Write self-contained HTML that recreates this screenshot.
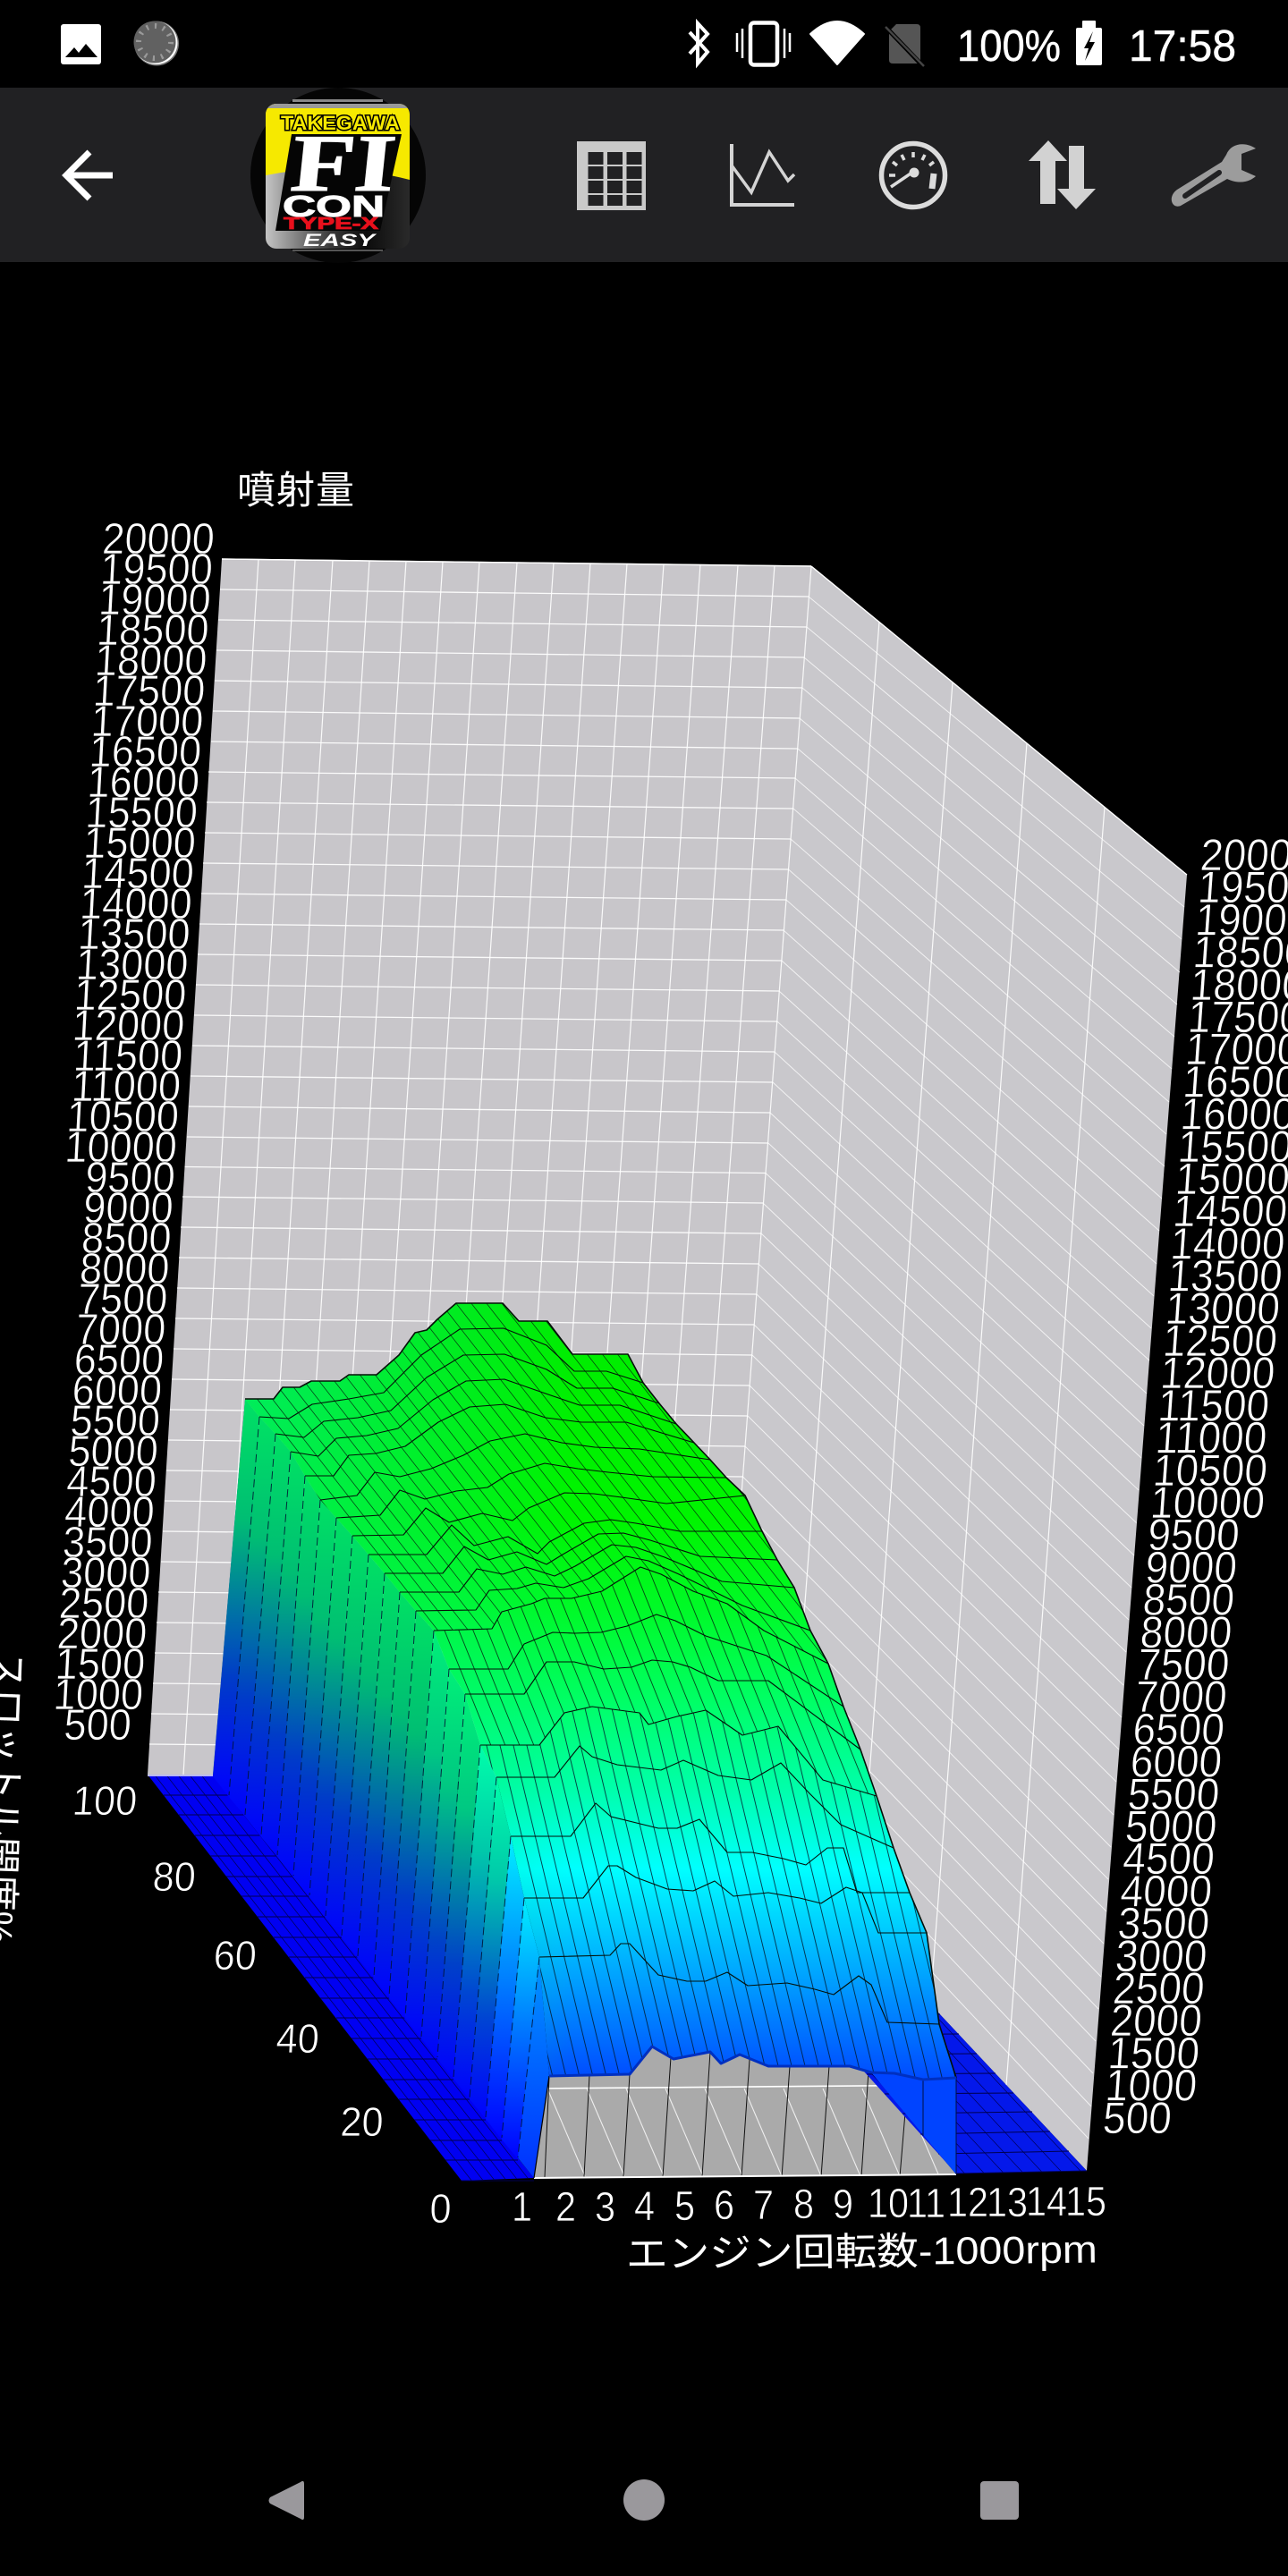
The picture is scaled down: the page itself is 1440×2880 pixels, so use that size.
<!DOCTYPE html>
<html lang="ja"><head><meta charset="utf-8"><title>FI CON 3D Map</title>
<style>
html,body{margin:0;padding:0;background:#000;width:1440px;height:2880px;overflow:hidden}
svg{display:block}
text{font-family:"Liberation Sans","Noto Sans CJK JP",sans-serif}
.n{fill:#fff;stroke:#000;stroke-width:.7;font-size:49px}
.r{fill:#fff;stroke:#000;stroke-width:.7;font-size:50px}
.z{fill:#fff;stroke:#000;stroke-width:.7;font-size:46px}
</style></head><body>
<svg xmlns="http://www.w3.org/2000/svg" width="1440" height="2880" viewBox="0 0 1440 2880">
<defs>
<linearGradient id="lg" x1="0" x2="1" y1="0" y2="0"><stop offset="0" stop-color="#c4c4c4"/><stop offset=".45" stop-color="#3a3a3a"/><stop offset=".7" stop-color="#0c0c0c"/><stop offset="1" stop-color="#2a2a2a"/></linearGradient>
<clipPath id="cl"><rect x="297" y="116" width="161" height="162" rx="12"/></clipPath>
<clipPath id="fl"><polygon points="597,2435 614,2321 704,2319 729,2288 753,2302 794,2294 806,2307 827,2297 859,2310 950,2310 974,2317 1069,2431"/></clipPath>
<linearGradient id="sg" gradientUnits="userSpaceOnUse" x1="0" x2="0" y1="1450" y2="2330">
<stop offset="0" stop-color="rgb(0,235,0)"/><stop offset=".284" stop-color="rgb(0,245,0)"/><stop offset=".398" stop-color="rgb(0,250,40)"/><stop offset=".511" stop-color="rgb(0,255,100)"/><stop offset=".625" stop-color="rgb(0,255,170)"/><stop offset=".727" stop-color="rgb(0,255,255)"/><stop offset=".852" stop-color="rgb(0,170,255)"/><stop offset="1" stop-color="rgb(0,70,255)"/>
</linearGradient>
<linearGradient id="sl" gradientUnits="userSpaceOnUse" x1="274" x2="640" y1="0" y2="0"><stop offset="0" stop-color="rgb(0,235,130)" stop-opacity=".7"/><stop offset="1" stop-color="rgb(0,235,130)" stop-opacity="0"/></linearGradient>
<linearGradient id="f1" x1="0" x2="0" y1="1" y2="0"><stop offset="0" stop-color="#0000ff"/><stop offset=".3" stop-color="rgb(0,60,200)"/><stop offset=".7" stop-color="rgb(0,190,115)"/><stop offset="1" stop-color="rgb(0,225,100)"/></linearGradient>
<linearGradient id="f2" x1="0" x2="0" y1="1" y2="0"><stop offset="0" stop-color="#0000ff"/><stop offset=".3" stop-color="rgb(0,65,200)"/><stop offset=".7" stop-color="rgb(0,200,130)"/><stop offset="1" stop-color="rgb(0,240,120)"/></linearGradient>
<linearGradient id="f3" x1="0" x2="0" y1="1" y2="0"><stop offset="0" stop-color="#0000ff"/><stop offset=".3" stop-color="rgb(0,70,210)"/><stop offset=".7" stop-color="rgb(0,200,170)"/><stop offset="1" stop-color="rgb(0,255,170)"/></linearGradient>
<linearGradient id="f4" x1="0" x2="0" y1="1" y2="0"><stop offset="0" stop-color="#0000ff"/><stop offset="1" stop-color="rgb(0,240,255)"/></linearGradient>
<linearGradient id="f5" x1="0" x2="0" y1="1" y2="0"><stop offset="0" stop-color="#0030ff"/><stop offset="1" stop-color="rgb(0,150,255)"/></linearGradient>
<pattern id="pa" width="17" height="40" patternUnits="userSpaceOnUse" patternTransform="skewX(38)"><rect width="1" height="40" fill="#04200e"/></pattern>
<pattern id="pb" width="16" height="40" patternUnits="userSpaceOnUse" patternTransform="skewX(22)"><rect width="1" height="40" fill="#04200e"/></pattern>
<pattern id="pc" width="15" height="40" patternUnits="userSpaceOnUse" patternTransform="skewX(13.5)"><rect width="1" height="40" fill="#02182a"/></pattern>
<pattern id="ps" width="13" height="40" patternUnits="userSpaceOnUse" patternTransform="skewX(38)"><rect width="1" height="40" fill="#000060"/></pattern>
<pattern id="pr" width="22" height="40" patternUnits="userSpaceOnUse" patternTransform="skewX(43)"><rect width="1" height="40" fill="#000060"/></pattern>
<polygon id="sf" points="274,1564 306,1564 316,1551 335,1551 348,1544 380,1544 390,1537 421,1537 446,1515 464,1490 477,1487 489,1475 510,1457 562,1457 580,1477 612,1477 640,1514 702,1514 719,1546 737,1569 756,1592 776,1613 794,1632 812,1652 833,1672 852,1712 869,1744 888,1775 906,1823 926,1860 943,1908 962,1956 980,2008 999,2066 1017,2116 1036,2161 1050,2263 1069,2323 1032,2325 1000,2318 974,2317 950,2310 859,2310 827,2297 806,2307 794,2294 753,2302 729,2288 704,2319 614,2321 603,2188 586,2122 571,2053 555,1987 537,1951 520,1894 502,1866 485,1823 465,1801 447,1780 430,1759 412,1738 394,1717 376,1697 358,1677 341,1650 325,1623 308,1603 290,1584"/>
</defs>
<rect width="1440" height="2880" fill="#000"/>
<!-- status bar -->
<rect x="68" y="27" width="45" height="45" rx="3" fill="#fff"/>
<path d="M73 64L83 53L88 59L96 49L109 64Z" fill="#000"/>
<circle cx="175" cy="48.5" r="25" fill="#777"/><circle cx="174.5" cy="48" r="24" fill="#fff"/><circle cx="173" cy="47" r="23.5" fill="#616161"/>
<circle cx="173" cy="47" r="18" fill="none" stroke="#9a9a9a" stroke-width="6" stroke-dasharray="2.2 7.2"/>
<path d="M771 36L791 58L780 71V26L791 38L771 60" fill="none" stroke="#fff" stroke-width="4"/>
<rect x="839" y="25.500" width="30" height="47" rx="4" fill="none" stroke="#fff" stroke-width="4.500"/>
<path d="M830 32V65M877 32V65M824 37V58M883 37V58" stroke="#fff" stroke-width="2.500"/>
<path d="M936 72L906 38Q936 10 966 38Z" fill="#fff" stroke="#fff" stroke-width="2" stroke-linejoin="round"/>
<path d="M1002 27H1025Q1029 27 1029 31V71H998Q994 71 994 67V35Z" fill="#555"/>
<path d="M990 30L1032 74" stroke="#000" stroke-width="5"/><path d="M990 30L1033 74" stroke="#444" stroke-width="2.500"/>
<text x="1070" y="68" font-size="49" fill="#fff" stroke="#fff" stroke-width=".5" textLength="116" lengthAdjust="spacingAndGlyphs">100%</text>
<rect x="1203" y="31" width="29" height="42" rx="2" fill="#fff"/><rect x="1210" y="23" width="15" height="9" rx="1" fill="#fff"/>
<path d="M1222 35L1212 54H1217L1213 68L1224 47H1218Z" fill="#000"/>
<text x="1262" y="68" font-size="49" fill="#fff" stroke="#fff" stroke-width=".5" textLength="120" lengthAdjust="spacingAndGlyphs">17:58</text>
<!-- toolbar -->
<rect y="98" width="1440" height="195" fill="#212123"/>
<path d="M126 196H74M100 170L74 196L100 222" fill="none" stroke="#fff" stroke-width="7"/>
<!-- logo -->
<circle cx="378" cy="196" r="98" fill="#050505"/>
<rect x="327" y="111" width="101" height="3" fill="#888"/><rect x="327" y="279" width="101" height="2" fill="#555"/>
<g clip-path="url(#cl)">
<rect x="297" y="116" width="161" height="162" fill="url(#lg)"/>
<path d="M297 116H458V201Q375 180 297 196Z" fill="#f6e900"/>
<rect x="297" y="116" width="161" height="5" fill="#999"/>
<polygon points="326,150 449,150 425,258 308,258" fill="#050505"/>
</g>
<text x="314" y="145" font-size="22" font-weight="700" fill="#f6e900" stroke="#000" stroke-width="3" paint-order="stroke" textLength="133" lengthAdjust="spacingAndGlyphs">TAKEGAWA</text>
<text transform="translate(323 213) skewX(-6)" font-size="91" font-weight="700" fill="#fff" stroke="#fff" stroke-width="1" textLength="116" lengthAdjust="spacingAndGlyphs" style="font-family:'Liberation Serif',serif">FI</text>
<text x="316" y="242" font-size="33" font-weight="700" fill="#fff" stroke="#fff" stroke-width="1" textLength="114" lengthAdjust="spacingAndGlyphs">CON</text>
<text x="317" y="256" font-size="18" font-weight="700" fill="#e8101c" stroke="#e8101c" stroke-width=".8" textLength="106" lengthAdjust="spacingAndGlyphs">TYPE-X</text>
<text x="339" y="275" font-size="19" font-weight="700" font-style="italic" fill="#fff" textLength="80" lengthAdjust="spacingAndGlyphs">EASY</text>
<!-- toolbar icons -->
<rect x="645" y="158" width="77" height="77" fill="#c9c9c9"/>
<g fill="#212123"><rect x="657.500" y="170" width="17" height="14"/><rect x="679" y="170" width="17" height="14"/><rect x="700.500" y="170" width="17" height="14"/><rect x="657.500" y="186" width="17" height="14"/><rect x="679" y="186" width="17" height="14"/><rect x="700.500" y="186" width="17" height="14"/><rect x="657.500" y="202" width="17" height="14"/><rect x="679" y="202" width="17" height="14"/><rect x="700.500" y="202" width="17" height="14"/><rect x="657.500" y="218" width="17" height="12"/><rect x="679" y="218" width="17" height="12"/><rect x="700.500" y="218" width="17" height="12"/></g>
<path d="M818 161V229H888" fill="none" stroke="#d4d4d4" stroke-width="4"/>
<path d="M818 185L840 215L860 170L881 202L888 195" fill="none" stroke="#d4d4d4" stroke-width="3.500"/>
<circle cx="1021" cy="196" r="35.500" fill="none" stroke="#dcdcdc" stroke-width="5.500"/>
<path d="M1021 170V176M1008 173L1011 179M1034 173L1031 179M998 181L1003 185M1044 181L1039 185M994 196H1001" stroke="#dcdcdc" stroke-width="3.500"/>
<path d="M996 209L1021 192" stroke="#dcdcdc" stroke-width="3.500"/><circle cx="1022" cy="193" r="5.500" fill="#dcdcdc"/>
<path d="M1044 194L1042 211" stroke="#dcdcdc" stroke-width="7"/>
<path d="M1172 157L1193 180H1180V228H1163V180H1150Z" fill="#d2d2d2"/>
<path d="M1203 234L1182 211H1195V163H1212V211H1225Z" fill="#d2d2d2"/>
<path d="M1404 166C1392 158 1376 160 1371 173L1366 181L1316 212C1305 220 1310 234 1320 230L1372 200C1385 206 1396 204 1404 197L1388 190V172Z" fill="#9c9c9c"/>
<path d="M1325 219L1363 193" stroke="#212123" stroke-width="6" stroke-linecap="round"/>

<!-- walls -->
<polygon points="248,625 907,633 805,1990 165,1984" fill="#c8c6ca"/>
<polygon points="907,633 1327,978 1215,2427 805,1990" fill="#c9c8cc"/>
<path fill="none" stroke="#fff" stroke-width="1.300" stroke-opacity=".9" d="M248 625L907 633M246 659L904 667M244 693L902 701M242 727L899 735M240 761L897 769M238 795L894 803M236 829L892 837M233 863L889 870M231 897L887 904M229 931L884 938M227 965L881.500 972M225 999L879 1006M223 1033L876 1040M221 1067L874 1074M219 1101L871 1108M217 1135L869 1142M215 1169L866 1176M213 1203L864 1210M211 1237L861 1244M209 1271L859 1278M206.500 1304.500L856 1311.500M204 1338L853 1345M202 1372L851 1379M200 1406L848 1413M198 1440L846 1447M196 1474L843 1481M194 1508L841 1515M192 1542L838 1549M190 1576L836 1583M188 1610L833 1617M186 1644L830.500 1651M184 1678L828 1685M182 1712L825 1719M180 1746L823 1753M177 1780L820 1786M175 1814L818 1820M173 1848L815 1854M171 1882L813 1888M169 1916L810 1922M167 1950L808 1956"/>
<path fill="none" stroke="#fff" stroke-width="1.200" stroke-opacity=".9" d="M289 625L205 1984M330 626L245 1985M372 626L285 1985M413 627L325 1986M454 627L365 1986M495 628L405 1986M536 628L445 1987M578 629L485 1987M619 629L525 1987M660 630L565 1988M701 630L605 1988M742 631L645 1988M783 631L685 1989M825 632L725 1989M866 632L765 1990M907 633L805 1990"/>
<path fill="none" stroke="#fff" stroke-width="1" stroke-opacity=".75" d="M904 667L1324 1014M902 701L1321 1050M899 735L1319 1087M897 769L1316 1123M894 803L1313 1159M892 837L1310 1195M889 870L1307 1232M887 904L1304 1268M884 938L1302 1304M881.500 972L1299 1340M879 1006L1296 1376M876 1040L1293 1413M874 1074L1290 1449M871 1108L1287 1485M869 1142L1285 1521M866 1176L1282 1558M864 1210L1279 1594M861 1244L1276 1630M859 1278L1273 1666M856 1311.500L1270.500 1702.500M853 1345L1268 1739M851 1379L1265 1775M848 1413L1262 1811M846 1447L1259 1847M843 1481L1256 1884M841 1515L1254 1920M838 1549L1251 1956M836 1583L1248 1992M833 1617L1245 2029M830.500 1651L1242 2065M828 1685L1239 2101M825 1719L1237 2137M823 1753L1234 2173M820 1786L1231 2210M818 1820L1228 2246M815 1854L1225 2282M813 1888L1222 2318M810 1922L1220 2355M808 1956L1217 2391"/>
<path fill="none" stroke="#fff" stroke-width="1.200" stroke-opacity=".9" d="M983 695L879 2069M1065 763L959 2154M1148 831L1040 2241M1235 902L1125 2331"/>
<path fill="none" stroke="#fff" stroke-width="1.400" d="M248 625L907 633M907 633L1327 978"/>

<!-- floor front -->
<polygon points="597,2435 614,2321 704,2319 729,2288 753,2302 794,2294 806,2307 827,2297 859,2310 950,2310 974,2317 1069,2431" fill="#aaaaaa"/>
<g clip-path="url(#fl)">
<path stroke="#fff" stroke-width="1.600" d="M600 2335L1080 2331"/>
<path stroke="#eee" stroke-width="1.100" d="M612 2335L654 2433M656 2335L698 2433M700 2335L742 2433M744 2335L786 2433M788 2335L830 2433M832 2335L874 2433M876 2335L918 2433M920 2335L962 2433M964 2335L1006 2433M1008 2335L1050 2433"/>
<path stroke="#111" stroke-width="1" d="M614 2321L609 2434M659 2320L653 2434M704 2319L697 2434M750 2300L741 2434M794 2294L785 2434M838 2303L829 2434M883 2310L874 2434M927 2310L918 2434M971 2316L963 2434M1013 2350L1006 2434"/>
</g>
<path stroke="#fff" stroke-width="2" d="M597 2435L1069 2431"/>

<!-- blue floor strips -->
<polygon points="165,1984 238,1984 597,2435 516,2438" fill="#0000f2"/>
<polygon points="165,1984 238,1984 597,2435 516,2438" fill="url(#ps)"/>
<polygon points="669,1987 805,1990 1215,2427 1069,2430" fill="#0418ea"/>
<polygon points="669,1987 805,1990 1215,2427 1069,2430" fill="url(#pr)"/>
<path stroke="#b8b8f0" stroke-width="2" d="M165 1985H238"/>
<path stroke="#000050" stroke-width="1" fill="none" d="M183 2007H256M200 2029H274M218 2052H292M235 2075H310M253 2098H328M270 2120H346M288 2143H364M305 2166H382M323 2188H400M341 2211H418M358 2234H435M376 2256H453M393 2279H471M411 2302H489M428 2325H507M446 2347H525M463 2370H543M481 2393H561M498 2415H579M516 2438H597"/>
<path stroke="#000050" stroke-width="1" fill="none" d="M909 2253L1051 2252M929 2275L1072 2274M949 2297L1092 2296M969 2319L1113 2318M989 2341L1133 2340M1009 2363L1154 2361M1029 2386L1174 2383M1049 2408L1195 2405M1069 2430L1215 2427"/>

<!-- left face -->
<polygon points="274,1564 614,2321 597,2435 238,1984" fill="#006090"/>
<g>
<polygon points="274,1564 290,1584 256,2009 238,1986" fill="url(#f1)"/>
<polygon points="290,1584 308,1603 274,2031 256,2009" fill="url(#f1)"/>
<polygon points="308,1603 325,1623 292,2054 274,2031" fill="url(#f1)"/>
<polygon points="325,1623 341,1650 310,2076 292,2054" fill="url(#f1)"/>
<polygon points="341,1650 358,1677 328,2099 310,2076" fill="url(#f1)"/>
<polygon points="358,1677 376,1697 346,2121 328,2099" fill="url(#f1)"/>
<polygon points="376,1697 394,1717 364,2144 346,2121" fill="url(#f1)"/>
<polygon points="394,1717 412,1738 382,2166 364,2144" fill="url(#f1)"/>
<polygon points="412,1738 430,1759 400,2189 382,2166" fill="url(#f1)"/>
<polygon points="430,1759 447,1780 418,2212 400,2189" fill="url(#f1)"/>
<polygon points="447,1780 465,1801 435,2234 418,2212" fill="url(#f1)"/>
<polygon points="465,1801 485,1823 453,2257 435,2234" fill="url(#f1)"/>
<polygon points="485,1823 502,1866 471,2279 453,2257" fill="url(#f2)"/>
<polygon points="502,1866 520,1894 489,2302 471,2279" fill="url(#f2)"/>
<polygon points="520,1894 537,1951 507,2324 489,2302" fill="url(#f2)"/>
<polygon points="537,1951 555,1987 525,2347 507,2324" fill="url(#f3)"/>
<polygon points="555,1987 571,2053 543,2369 525,2347" fill="url(#f3)"/>
<polygon points="571,2053 586,2122 561,2392 543,2369" fill="url(#f4)"/>
<polygon points="586,2122 603,2188 579,2414 561,2392" fill="url(#f4)"/>
<polygon points="603,2188 614,2321 597,2435 579,2412" fill="url(#f5)"/>
</g>
<path fill="none" stroke="#001030" stroke-width="1" stroke-dasharray="9 5" opacity=".85" d="M290 1584L256 2007M308 1603L274 2029M325 1623L292 2052M341 1650L310 2074M358 1677L328 2097M376 1697L346 2119M394 1717L364 2142M412 1738L382 2164M430 1759L400 2187M447 1780L418 2210M465 1801L435 2232M485 1823L453 2255M502 1866L471 2277M520 1894L489 2300M537 1951L507 2322M555 1987L525 2345M571 2053L543 2367M586 2122L561 2390M603 2188L579 2412"/>
<path fill="none" stroke="#000" stroke-width="1.200" d="M614 2321L597 2435"/>

<!-- front-right drop -->
<polygon points="1069,2323 1069,2431 974,2317 1000,2318 1032,2325" fill="#0044ff"/>
<path stroke="#001040" stroke-width="1" d="M1032 2325V2388M1069 2323V2431"/>

<!-- surface -->
<use href="#sf" fill="url(#sg)"/>
<use href="#sf" fill="url(#sl)"/>
<polygon fill="url(#pa)" opacity=".8" points="274,1564 306,1564 316,1551 335,1551 348,1544 380,1544 390,1537 421,1537 446,1515 464,1490 477,1487 489,1475 510,1457 562,1457 580,1477 612,1477 640,1514 702,1514 719,1546 737,1569 756,1592 776,1613 794,1632 812,1652 833,1672 852,1712 869,1744 888,1775 906,1823 926,1860 854,1823 813,1793 775,1779 739,1760 716,1752 673,1779 639,1787 609,1787 594,1793 561,1802 550,1821 485,1823 465,1801 447,1780 430,1759 412,1738 394,1717 376,1697 358,1677 341,1650 325,1623 308,1603 290,1584"/>
<polygon fill="url(#pb)" opacity=".8" points="485,1823 550,1821 561,1802 594,1793 609,1787 639,1787 673,1779 716,1752 739,1760 775,1779 813,1793 854,1823 926,1860 943,1908 962,1956 980,2008 920,1990 870,1930 830,1940 789,1912 757,1919 725,1928 715,1915 662,1908 631,1915 603,1951 537,1951 520,1894 502,1866"/>
<polygon fill="url(#pc)" opacity=".8" points="537,1951 603,1951 631,1915 662,1908 715,1915 725,1928 757,1919 789,1912 830,1940 870,1930 920,1990 980,2008 999,2066 1017,2116 1036,2161 1050,2263 1069,2323 1032,2325 1000,2318 974,2317 950,2310 859,2310 827,2297 806,2307 794,2294 753,2302 729,2288 704,2319 614,2321 603,2188 586,2122 571,2053 555,1987"/>
<g fill="none" stroke="#041008" stroke-width="1.100" stroke-linejoin="round">
<polyline stroke-width="1.600" points="274,1564 306,1564 316,1551 335,1551 348,1544 380,1544 390,1537 421,1537 446,1515 464,1490 477,1487 489,1475 510,1457 562,1457 580,1477 612,1477 640,1514 702,1514 719,1546 737,1569 756,1592 776,1613 794,1632 812,1652 833,1672 852,1712 869,1744 888,1775 906,1823 926,1860 943,1908 962,1956 980,2008 999,2066 1017,2116 1036,2161 1050,2263 1069,2323"/>
<polyline points="290,1584 323,1586 349,1570 390,1564 429,1557 471,1515 514,1486 563,1485 611,1504 642,1533 678,1533 719,1546"/>
<polyline points="308,1603 340,1607 362,1589 400,1585 437,1577 477,1540 518,1515 564,1514 611,1531 645,1552 685,1552 737,1569"/>
<polyline points="325,1623 356,1628 376,1608 410,1605 445,1597 484,1565 521,1544 564,1542 610,1558 648,1571 693,1571 756,1592"/>
<polyline points="341,1650 373,1650 390,1627 420,1625 453,1617 490,1590 525,1573 565,1570 610,1585 650,1590 700,1590 776,1613"/>
<polyline points="358,1677 399,1672 419,1646 447,1651 482,1642 518,1627 548,1611 587,1603 628,1613 665,1618 715,1620 794,1632"/>
<polyline points="376,1697 425,1694 447,1666 475,1676 510,1667 545,1663 569,1648 609,1636 646,1642 680,1646 730,1651 812,1652"/>
<polyline points="394,1717 451,1716 476,1686 502,1702 539,1692 573,1700 591,1686 631,1669 664,1670 695,1674 745,1681 833,1672"/>
<polyline points="412,1738 477,1738 505,1705 530,1728 568,1718 601,1737 614,1724 653,1703 683,1699 711,1703 760,1712 852,1712"/>
<polyline points="430,1759 495,1759 519,1729 546,1744 578,1735 611,1749 629,1738 669,1715 697,1714 727,1722 783,1740 869,1744"/>
<polyline points="447,1780 513,1780 533,1754 562,1760 588,1752 620,1762 643,1751 684,1727 711,1730 743,1741 807,1768 888,1775"/>
<polyline points="465,1801 532,1800 547,1778 578,1776 599,1770 630,1775 658,1765 700,1740 725,1745 759,1760 830,1795 906,1823"/>
<polyline points="485,1823 550,1821 561,1802 594,1793 609,1787 639,1787 673,1779 716,1752 739,1760 775,1779 813,1793 854,1823 926,1860"/>
<polyline points="502,1866 568,1866 586,1838 618,1825 642,1826 672,1825 701,1818 734,1805 755,1812 789,1829 857,1851 943,1908"/>
<polyline points="520,1894 586,1894 611,1858 642,1858 675,1866 706,1864 729,1856 752,1858 772,1864 803,1879 859,1879 962,1956"/>
<polyline points="537,1951 603,1951 631,1915 662,1908 715,1915 725,1928 757,1919 789,1912 830,1940 870,1930 920,1990 980,2008"/>
<polyline points="555,1987 620,1987 648,1952 662,1964 690,1973 739,1979 764,1968 803,1985 840,1990 873,1971 905,2005 940,2040 999,2066"/>
<polyline points="571,2053 638,2053 666,2016 683,2031 736,2044 757,2044 782,2034 813,2071 841,2071 876,2078 901,2085 925,2066 943,2066 958,2116 1017,2116"/>
<polyline points="586,2122 652,2122 680,2086 690,2086 711,2099 746,2112 775,2114 799,2103 820,2120 859,2116 894,2122 918,2128 946,2110 964,2116 982,2161 1036,2161"/>
<polyline points="603,2188 682,2186 694,2173 704,2173 736,2208 768,2215 789,2215 813,2205 836,2220 880,2217 911,2224 932,2230 960,2209 974,2219 992,2261 1050,2263"/>
<polyline stroke="#0030c0" stroke-width="3" points="614,2321 704,2319 729,2288 753,2302 794,2294 806,2307 827,2297 859,2310 950,2310 974,2317 1000,2318 1032,2325 1069,2323"/>
</g>

<!-- titles -->
<text x="265" y="563" font-size="43" fill="#fff" textLength="131">噴射量</text>
<g text-anchor="end">
<text class="n" transform="translate(239 619) skewX(-3) scale(.92 1)">20000</text>
<text class="n" transform="translate(236.900 653) skewX(-3) scale(.92 1)">19500</text>
<text class="n" transform="translate(234.800 687) skewX(-3) scale(.92 1)">19000</text>
<text class="n" transform="translate(232.700 721) skewX(-3) scale(.92 1)">18500</text>
<text class="n" transform="translate(230.600 755) skewX(-3) scale(.92 1)">18000</text>
<text class="n" transform="translate(228.500 789) skewX(-3) scale(.92 1)">17500</text>
<text class="n" transform="translate(226.400 823) skewX(-3) scale(.92 1)">17000</text>
<text class="n" transform="translate(224.300 857) skewX(-3) scale(.92 1)">16500</text>
<text class="n" transform="translate(222.200 891) skewX(-3) scale(.92 1)">16000</text>
<text class="n" transform="translate(220.100 925) skewX(-3) scale(.92 1)">15500</text>
<text class="n" transform="translate(218 959) skewX(-3) scale(.92 1)">15000</text>
<text class="n" transform="translate(215.900 993) skewX(-3) scale(.92 1)">14500</text>
<text class="n" transform="translate(213.800 1027) skewX(-3) scale(.92 1)">14000</text>
<text class="n" transform="translate(211.700 1061) skewX(-3) scale(.92 1)">13500</text>
<text class="n" transform="translate(209.600 1095) skewX(-3) scale(.92 1)">13000</text>
<text class="n" transform="translate(207.500 1129) skewX(-3) scale(.92 1)">12500</text>
<text class="n" transform="translate(205.400 1163) skewX(-3) scale(.92 1)">12000</text>
<text class="n" transform="translate(203.300 1197) skewX(-3) scale(.92 1)">11500</text>
<text class="n" transform="translate(201.200 1231) skewX(-3) scale(.92 1)">11000</text>
<text class="n" transform="translate(199.100 1265) skewX(-3) scale(.92 1)">10500</text>
<text class="n" transform="translate(197 1299) skewX(-3) scale(.92 1)">10000</text>
<text class="n" transform="translate(194.900 1333) skewX(-3) scale(.92 1)">9500</text>
<text class="n" transform="translate(192.800 1367) skewX(-3) scale(.92 1)">9000</text>
<text class="n" transform="translate(190.700 1401) skewX(-3) scale(.92 1)">8500</text>
<text class="n" transform="translate(188.600 1435) skewX(-3) scale(.92 1)">8000</text>
<text class="n" transform="translate(186.500 1469) skewX(-3) scale(.92 1)">7500</text>
<text class="n" transform="translate(184.400 1503) skewX(-3) scale(.92 1)">7000</text>
<text class="n" transform="translate(182.300 1537) skewX(-3) scale(.92 1)">6500</text>
<text class="n" transform="translate(180.200 1571) skewX(-3) scale(.92 1)">6000</text>
<text class="n" transform="translate(178.100 1605) skewX(-3) scale(.92 1)">5500</text>
<text class="n" transform="translate(176 1639) skewX(-3) scale(.92 1)">5000</text>
<text class="n" transform="translate(173.900 1673) skewX(-3) scale(.92 1)">4500</text>
<text class="n" transform="translate(171.800 1707) skewX(-3) scale(.92 1)">4000</text>
<text class="n" transform="translate(169.700 1741) skewX(-3) scale(.92 1)">3500</text>
<text class="n" transform="translate(167.600 1775) skewX(-3) scale(.92 1)">3000</text>
<text class="n" transform="translate(165.500 1809) skewX(-3) scale(.92 1)">2500</text>
<text class="n" transform="translate(163.400 1843) skewX(-3) scale(.92 1)">2000</text>
<text class="n" transform="translate(161.300 1877) skewX(-3) scale(.92 1)">1500</text>
<text class="n" transform="translate(159.200 1911) skewX(-3) scale(.92 1)">1000</text>
<text class="n" transform="translate(146 1945) skewX(-3) scale(.92 1)">500</text>
</g>
<g>
<text class="r" transform="translate(1341 973) skewX(-4) scale(.92 1)">20000</text>
<text class="r" transform="translate(1338.200 1009.200) skewX(-4) scale(.92 1)">19500</text>
<text class="r" transform="translate(1335.400 1045.400) skewX(-4) scale(.92 1)">19000</text>
<text class="r" transform="translate(1332.600 1081.600) skewX(-4) scale(.92 1)">18500</text>
<text class="r" transform="translate(1329.800 1117.800) skewX(-4) scale(.92 1)">18000</text>
<text class="r" transform="translate(1327 1154) skewX(-4) scale(.92 1)">17500</text>
<text class="r" transform="translate(1324.200 1190.200) skewX(-4) scale(.92 1)">17000</text>
<text class="r" transform="translate(1321.400 1226.400) skewX(-4) scale(.92 1)">16500</text>
<text class="r" transform="translate(1318.600 1262.600) skewX(-4) scale(.92 1)">16000</text>
<text class="r" transform="translate(1315.800 1298.800) skewX(-4) scale(.92 1)">15500</text>
<text class="r" transform="translate(1313 1335) skewX(-4) scale(.92 1)">15000</text>
<text class="r" transform="translate(1310.200 1371.200) skewX(-4) scale(.92 1)">14500</text>
<text class="r" transform="translate(1307.500 1407.400) skewX(-4) scale(.92 1)">14000</text>
<text class="r" transform="translate(1304.700 1443.600) skewX(-4) scale(.92 1)">13500</text>
<text class="r" transform="translate(1301.900 1479.800) skewX(-4) scale(.92 1)">13000</text>
<text class="r" transform="translate(1299 1516) skewX(-4) scale(.92 1)">12500</text>
<text class="r" transform="translate(1296.300 1552.200) skewX(-4) scale(.92 1)">12000</text>
<text class="r" transform="translate(1293.500 1588.400) skewX(-4) scale(.92 1)">11500</text>
<text class="r" transform="translate(1290.700 1624.600) skewX(-4) scale(.92 1)">11000</text>
<text class="r" transform="translate(1287.900 1660.800) skewX(-4) scale(.92 1)">10500</text>
<text class="r" transform="translate(1285 1697) skewX(-4) scale(.92 1)">10000</text>
<text class="r" transform="translate(1282.300 1733.200) skewX(-4) scale(.92 1)">9500</text>
<text class="r" transform="translate(1279.500 1769.400) skewX(-4) scale(.92 1)">9000</text>
<text class="r" transform="translate(1276.700 1805.600) skewX(-4) scale(.92 1)">8500</text>
<text class="r" transform="translate(1273.900 1841.800) skewX(-4) scale(.92 1)">8000</text>
<text class="r" transform="translate(1271 1878) skewX(-4) scale(.92 1)">7500</text>
<text class="r" transform="translate(1268.300 1914.200) skewX(-4) scale(.92 1)">7000</text>
<text class="r" transform="translate(1265.500 1950.400) skewX(-4) scale(.92 1)">6500</text>
<text class="r" transform="translate(1262.700 1986.600) skewX(-4) scale(.92 1)">6000</text>
<text class="r" transform="translate(1259.900 2022.800) skewX(-4) scale(.92 1)">5500</text>
<text class="r" transform="translate(1257 2059) skewX(-4) scale(.92 1)">5000</text>
<text class="r" transform="translate(1254.400 2095.200) skewX(-4) scale(.92 1)">4500</text>
<text class="r" transform="translate(1251.600 2131.400) skewX(-4) scale(.92 1)">4000</text>
<text class="r" transform="translate(1248.800 2167.600) skewX(-4) scale(.92 1)">3500</text>
<text class="r" transform="translate(1246 2203.800) skewX(-4) scale(.92 1)">3000</text>
<text class="r" transform="translate(1243.200 2240) skewX(-4) scale(.92 1)">2500</text>
<text class="r" transform="translate(1240.400 2276.200) skewX(-4) scale(.92 1)">2000</text>
<text class="r" transform="translate(1237.600 2312.400) skewX(-4) scale(.92 1)">1500</text>
<text class="r" transform="translate(1234.800 2348.600) skewX(-4) scale(.92 1)">1000</text>
<text class="r" transform="translate(1232 2384.800) skewX(-4) scale(.92 1)">500</text>
</g>
<!-- Z labels -->
<g>
<text class="z" transform="translate(80 2029) skewX(-4) scale(.94 1)">100</text>
<text class="z" transform="translate(170 2114) skewX(-3) scale(.94 1)">80</text>
<text class="z" transform="translate(238 2202) skewX(-3) scale(.94 1)">60</text>
<text class="z" transform="translate(308 2295) skewX(-3) scale(.94 1)">40</text>
<text class="z" transform="translate(380 2388) skewX(-2) scale(.94 1)">20</text>
<text class="z" transform="translate(480 2485) skewX(-2) scale(.94 1)">0</text>
</g>
<!-- X labels -->
<g>
<text class="z" transform="translate(572 2483) scale(.9 1)">1</text>
<text class="z" transform="translate(621 2483) scale(.9 1)">2</text>
<text class="z" transform="translate(665 2483) scale(.9 1)">3</text>
<text class="z" transform="translate(709 2482) scale(.9 1)">4</text>
<text class="z" transform="translate(754 2482) scale(.9 1)">5</text>
<text class="z" transform="translate(798 2481) scale(.9 1)">6</text>
<text class="z" transform="translate(842 2481) scale(.9 1)">7</text>
<text class="z" transform="translate(887 2480) scale(.9 1)">8</text>
<text class="z" transform="translate(931 2480) scale(.9 1)">9</text>
<text class="z" transform="translate(970 2479) scale(.9 1)">10</text>
<text class="z" transform="translate(1014 2479) scale(.9 1)">11</text>
<text class="z" transform="translate(1059 2478) scale(.9 1)">12</text>
<text class="z" transform="translate(1103 2478) scale(.9 1)">13</text>
<text class="z" transform="translate(1147 2477) scale(.9 1)">14</text>
<text class="z" transform="translate(1191 2477) scale(.9 1)">15</text>
</g>
<text transform="translate(700 2535) rotate(-.6)" font-size="43" fill="#fff" textLength="527" lengthAdjust="spacingAndGlyphs">エンジン回転数-1000rpm</text>
<text transform="translate(-6 1846) rotate(92)" font-size="44" fill="#fff" textLength="327" lengthAdjust="spacingAndGlyphs">スロットル開度%</text>
<!-- nav bar -->
<path d="M302 2792L336 2775Q340 2772 340 2777V2814Q340 2819 336 2816L302 2799Q299 2796 302 2792Z" fill="#9a989c"/>
<circle cx="720" cy="2795" r="23" fill="#9a989c"/>
<rect x="1096" y="2774" width="43" height="43" rx="4" fill="#9a989c"/>
</svg>
</body></html>
